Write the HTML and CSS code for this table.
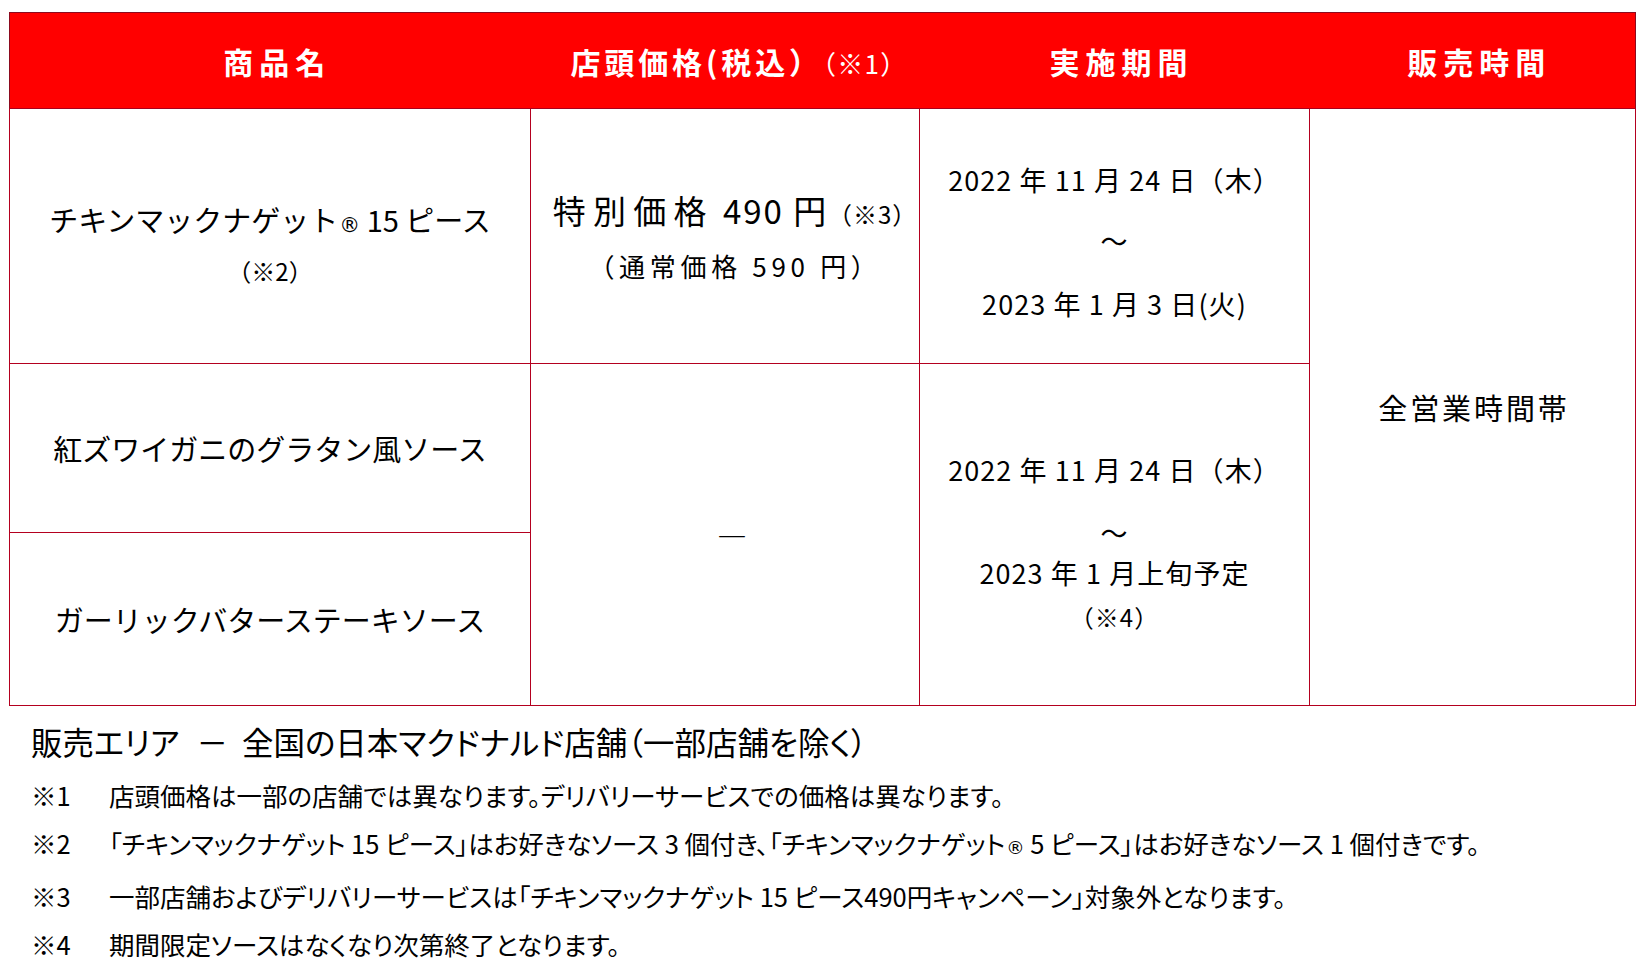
FILE: index.html
```html
<!DOCTYPE html>
<html lang="ja">
<head>
<meta charset="utf-8">
<title>チキンマックナゲット キャンペーン</title>
<link rel="stylesheet" href="styles.css">
</head>
<body>
<main class="page">
  <table class="campaign">
    <colgroup>
      <col class="c1"><col class="c2"><col class="c3"><col class="c4">
    </colgroup>
    <thead>
      <tr class="head-row">
        <th>商品名</th>
        <th class="th-price">店頭価格(税込）<span class="head-note">（※1）</span></th>
        <th>実施期間</th>
        <th>販売時間</th>
      </tr>
    </thead>
    <tbody>
      <tr class="r1">
        <td class="name name-first">
          <div class="name-line">チキンマックナゲット<span class="reg">®</span> 15 ピース</div>
          <div class="name-sub">（※2）</div>
        </td>
        <td class="price">
          <div class="special"><span class="wide">特別価格</span> 490 円<span class="mark">（※3）</span></div>
          <div class="normal">（通常価格 590 円）</div>
        </td>
        <td class="period period-first">
          <div class="date">2022 年 11 月 24 日（木）</div>
          <div class="tilde">～</div>
          <div class="date">2023 年 1 月 3 日(火)</div>
        </td>
        <td class="hours" rowspan="3">全営業時間帯</td>
      </tr>
      <tr class="r2">
        <td class="name">紅ズワイガニのグラタン風ソース</td>
        <td class="dash" rowspan="2">―</td>
        <td class="period period-second" rowspan="2">
          <div class="date">2022 年 11 月 24 日（木）</div>
          <div class="tilde tilde-tight">～</div>
          <div class="date">2023 年 1 月上旬予定</div>
          <div class="date-note">（※4）</div>
        </td>
      </tr>
      <tr class="r3">
        <td class="name">ガーリックバターステーキソース</td>
      </tr>
    </tbody>
  </table>

  <section class="notes">
    <p class="area">販売エリア<span class="sep">－</span>全国の日本マクドナルド店舗（一部店舗を除く）</p>
    <dl class="footnotes">
      <dt>※1</dt>
      <dd>店頭価格は一部の店舗では異なります。デリバリーサービスでの価格は異なります。</dd>
      <dt>※2</dt>
      <dd>「チキンマックナゲット 15 ピース」はお好きなソース 3 個付き、「チキンマックナゲット<span class="reg">®</span> 5 ピース」はお好きなソース 1 個付きです。</dd>
      <dt>※3</dt>
      <dd>一部店舗およびデリバリーサービスは「チキンマックナゲット 15 ピース490円キャンペーン」対象外となります。</dd>
      <dt>※4</dt>
      <dd>期間限定ソースはなくなり次第終了となります。</dd>
    </dl>
  </section>
</main>
</body>
</html>
```

FILE: styles.css
```css
html, body {
  margin: 0;
  padding: 0;
  background: #ffffff;
}

body {
  font-family: "Noto Sans CJK JP", "Noto Sans", sans-serif;
  color: #000000;
}

.page {
  padding: 12px 0 0 9px;
}

.campaign {
  border-collapse: collapse;
  table-layout: fixed;
  width: 1626px;
  border: 1px solid #8c0a1e;
}

.c1 { width: 521px; }
.c2 { width: 389px; }
.c3 { width: 390px; }
.c4 { width: 326px; }

.head-row {
  height: 96px;
}

.head-row th {
  background: #ff0000;
  color: #ffffff;
  font-size: 30px;
  font-weight: 700;
  letter-spacing: 0.2em;
  text-align: center;
  vertical-align: middle;
  padding: 0 0 0 14px;
  border: none;
  border-bottom: 1px solid #a8001c;
}

.head-row .th-price {
  letter-spacing: 0.13em;
  padding-left: 28px;
}

.head-note {
  font-size: 26px;
  font-weight: 400;
  letter-spacing: 0.05em;
}

.campaign td {
  border: 1px solid #b4001f;
  text-align: center;
  vertical-align: middle;
  padding: 0;
  line-height: 1.2;
}

.r1 { height: 255px; }
.r2 { height: 169px; }
.r3 { height: 173px; }

.name {
  font-size: 29px;
}

.name-first {
  padding-top: 15px !important;
}

.reg {
  font-family: "DejaVu Sans", sans-serif;
  font-size: 0.72em;
  vertical-align: baseline;
  margin-left: 1px;
}

.name-sub {
  font-size: 24px;
  margin-top: 19px;
}

.price {
  letter-spacing: 0.12em;
  padding-left: 20px !important;
}

.special {
  font-size: 33px;
  margin-bottom: 20px;
}

.wide {
  letter-spacing: 0.22em;
}

.mark {
  font-size: 24px;
  letter-spacing: 0.04em;
}

.normal {
  font-size: 26px;
  letter-spacing: 0.18em;
}

.period {
  font-size: 27px;
  letter-spacing: 0.04em;
}

.period-first {
  padding-top: 12px !important;
}

.period-second {
  padding-top: 16px !important;
}

.tilde {
  font-size: 27px;
  margin: 29px 0 30px;
}

.tilde-tight {
  margin: 31px 0 8px;
}

.date-note {
  font-size: 24px;
  margin-top: 13px;
}

.hours {
  font-size: 29px;
  letter-spacing: 0.1em;
  padding-left: 3px !important;
}

.dash {
  font-size: 30px;
  padding-left: 14px !important;
}

.notes {
  padding: 14px 0 0 22px;
}

.area {
  margin: 0;
  font-size: 31.5px;
  line-height: 42px;
  font-feature-settings: "palt";
}

.sep {
  margin: 0 14px 0 17px;
}

.footnotes {
  margin: 15px 0 0 0;
  display: grid;
  grid-template-columns: 78px auto;
  row-gap: 12px;
  font-size: 25.5px;
  line-height: 36px;
  font-feature-settings: "palt";
}

.footnotes dt {
  margin: 0;
}

.footnotes dd {
  margin: 0;
}
```
